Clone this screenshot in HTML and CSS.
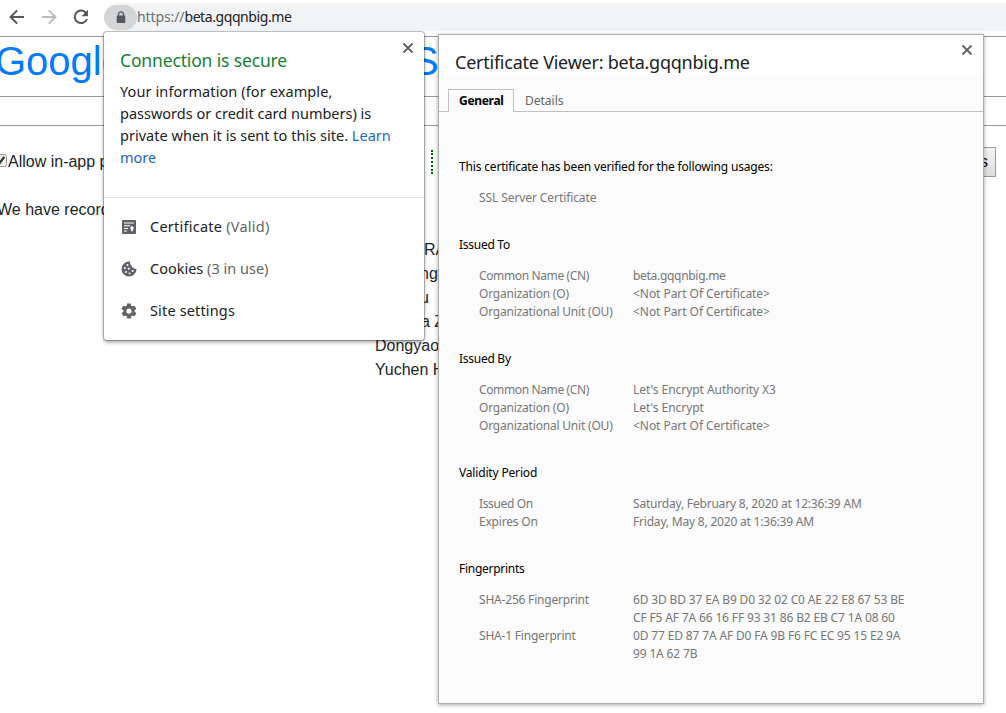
FILE: index.html
```html
<!DOCTYPE html>
<html lang="en">
<head>
<meta charset="utf-8">
<title>Certificate Viewer</title>
<link rel="stylesheet" href="styles.css">
</head>
<body>
<header class="toolbar">
  <nav class="nav">
    <svg width="18" height="18" viewBox="0 0 18 18" fill="none" stroke="#54575b" stroke-width="2"><path d="M16 9H3M9.2 2.4 2.6 9l6.6 6.6"/></svg>
    <svg width="18" height="18" viewBox="0 0 18 18" fill="none" stroke="#b9bbbd" stroke-width="2"><path d="M2 9h13M8.8 2.4 15.4 9l-6.6 6.6"/></svg>
    <svg width="18" height="18" viewBox="0 0 18 18"><path d="M14.3 5.2A6.3 6.3 0 1 0 15 11" fill="none" stroke="#54575b" stroke-width="2"/><path d="M16 1.8v6.4H9.6z" fill="#54575b"/></svg>
  </nav>
  <div class="omnibox">
    <span class="lock"><svg width="10" height="13" viewBox="0 0 10 13"><path d="M2.5 5V3.3a2.5 2.5 0 0 1 5 0V5" fill="none" stroke="#54575b" stroke-width="1.3"/><rect x=".7" y="4.6" width="8.6" height="7.4" rx="1" fill="#54575b"/></svg></span>
    <span class="url"><span class="scheme">https://</span>beta.gqqnbig.me</span>
  </div>
</header>

<main class="page">
  <h1 class="title"><span class="title-start">Google</span><span>S</span></h1>
  <div class="band"></div>
  <div class="options">
    <span class="check"><svg width="13" height="13" viewBox="0 0 13 13"><rect x=".5" y=".5" width="12" height="12" rx="2" fill="#eee" stroke="#999"/><path d="M3 6.6 5.3 9.5 10.3 2.8" fill="none" stroke="#333" stroke-width="2.2"/></svg></span>
    <span class="allow">Allow in-app p</span>
    <span class="dots"></span>
    <button class="submit">s</button>
  </div>
  <p class="records">We have record</p>
  <ul class="names">
    <li class="n1">RA</li>
    <li class="n2">ng</li>
    <li class="n3">u</li>
    <li class="n4">a Z</li>
    <li>Dongyao</li>
    <li>Yuchen H</li>
  </ul>
</main>

<section class="bubble">
  <svg class="close" width="12" height="12" viewBox="0 0 12 12"><path d="m1.5 1.5 9 9m0-9-9 9" stroke="#5f6368" stroke-width="1.9"/></svg>
  <div class="bubble-top">
    <h2 class="secure">Connection is secure</h2>
    <p class="info"><span class="i1">Your information (for example,</span><br>passwords or credit card numbers) is<br><span class="i3">private when it is sent to this site. <a>Learn</a></span><br><a>more</a></p>
  </div>
  <div class="menu">
    <div class="item"><svg width="16" height="16" viewBox="0 0 16 16"><rect x="1" y="1" width="14" height="14" rx="1" fill="#5f6368"/><path d="M3 4h10M3 6.7h6M3 9.4h4M3 12h3" stroke="#fff" stroke-width="1"/><circle cx="11" cy="9" r="1.7" fill="#fff"/><path d="M10.200 9.500h1.600V12.600l-.8-.6-.8.6z" fill="#fff"/></svg><span class="m1">Certificate <em>(Valid)</em></span></div>
    <div class="item"><svg width="16" height="16" viewBox="0 0 16 16"><path d="M8 .5A7.5 7.5 0 1 0 15.5 8c-1.2.4-2.3-.2-2.5-1.3-1.5.2-2.6-.9-2.3-2.3C9.300 4 8.500 2.500 9.300.6Q8.700.500 8 .5z" fill="#5f6368"/><g fill="#fff"><circle cx="6.500" cy="4" r="1"/><circle cx="3.800" cy="7" r="1"/><circle cx="7.700" cy="7.700" r="1"/><circle cx="5" cy="11" r="1"/><circle cx="8.500" cy="12.400" r=".9"/><circle cx="11.600" cy="10" r="1"/></g></svg><span class="m2">Cookies <em>(3 in use)</em></span></div>
    <div class="item"><svg width="18" height="18" viewBox="0 0 24 24"><path fill="#5f6368" d="M19.400 13c0-.3.100-.6.100-1s0-.700-.1-1l2.100-1.600c.2-.2.300-.4.100-.7l-2-3.400c-.1-.2-.4-.3-.6-.2l-2.500 1a7.300 7.300 0 0 0-1.700-1l-.4-2.600c0-.3-.2-.5-.5-.5h-4c-.2 0-.5.2-.5.400l-.4 2.700c-.6.200-1.100.6-1.700 1l-2.500-1c-.2-.1-.5 0-.6.200l-2 3.400c-.1.300-.1.500.1.700L4.500 11a8 8 0 0 0 0 2l-2.100 1.600c-.2.200-.2.400-.1.700l2 3.400c.1.200.4.300.6.200l2.500-1c.5.400 1.100.7 1.700 1l.4 2.600c0 .3.300.5.500.5h4c.3 0 .5-.2.500-.5l.4-2.600c.6-.3 1.200-.6 1.700-1l2.500 1c.2.100.5 0 .6-.2l2-3.400c.1-.3.1-.5-.1-.7zM12 15.500a3.500 3.500 0 1 1 0-7 3.500 3.500 0 0 1 0 7z"/></svg><span class="m3">Site settings</span></div>
  </div>
</section>

<section class="viewer">
  <svg class="close" width="12" height="12" viewBox="0 0 12 12"><path d="m1.500 1.500 9 9m0-9-9 9" stroke="#5f6368" stroke-width="1.900"/></svg>
  <h2 class="viewer-title">Certificate Viewer: beta.gqqnbig.me</h2>
  <div class="tabs"><span class="tab active">General</span><span class="tab">Details</span></div>
  <div class="details">
    <section class="group"><h3>This certificate has been verified for the following usages:</h3>
      <dl><dt class="ssl">SSL Server Certificate</dt><dd></dd></dl></section>
    <section class="group"><h3 class="tight">Issued To</h3>
      <dl><dt class="cn">Common Name (CN)</dt><dd class="host">beta.gqqnbig.me</dd><dt>Organization (O)</dt><dd>&lt;Not Part Of Certificate&gt;</dd><dt>Organizational Unit (OU)</dt><dd>&lt;Not Part Of Certificate&gt;</dd></dl></section>
    <section class="group"><h3 class="tight">Issued By</h3>
      <dl><dt class="cn">Common Name (CN)</dt><dd>Let's Encrypt Authority X3</dd><dt>Organization (O)</dt><dd>Let's Encrypt</dd><dt>Organizational Unit (OU)</dt><dd>&lt;Not Part Of Certificate&gt;</dd></dl></section>
    <section class="group"><h3>Validity Period</h3>
      <dl><dt class="on">Issued On</dt><dd class="date">Saturday, February 8, 2020 at 12:36:39 AM</dd><dt>Expires On</dt><dd class="date">Friday, May 8, 2020 at 1:36:39 AM</dd></dl></section>
    <section class="group"><h3 class="tight">Fingerprints</h3>
      <dl><dt>SHA-256 Fingerprint</dt><dd class="hex">6D 3D BD 37 EA B9 D0 32 02 C0 AE 22 E8 67 53 BE<br>CF F5 AF 7A 66 16 FF 93 31 86 B2 EB C7 1A 08 60</dd><dt>SHA-1 Fingerprint</dt><dd class="hex">0D 77 ED 87 7A AF D0 FA 9B F6 FC EC 95 15 E2 9A<br>99 1A 62 7B</dd></dl></section>
  </div>
</section>
</body>
</html>
```
FILE: styles.css
```css
* { box-sizing: border-box; }
body { margin: 0; width: 1006px; height: 713px; overflow: hidden; position: relative; background: #fff; color: #212529; font: 16px/24px "Liberation Sans", Arial, sans-serif; }
h1, h2, h3, p, ul, dl, dd { margin: 0; padding: 0; font-weight: normal; }
svg { display: block; flex: none; }
.toolbar, .bubble, .viewer { font-family: "Noto Sans", sans-serif; white-space: nowrap; }

.toolbar { height: 37px; padding-top: 3px; display: flex; border-bottom: 1px solid #999; }
.nav { width: 104px; height: 28px; padding-left: 8px; display: flex; align-items: center; gap: 14px; flex: none; }
.omnibox { flex: 1; height: 28px; display: flex; align-items: center; background: #f1f3f4; border-radius: 14px 0 0 14px; }
.lock { width: 33px; height: 25px; border-radius: 13px; background: #d3d5d7; display: flex; align-items: center; justify-content: center; }
.url { font-size: 14px; line-height: 20px; color: #202124; letter-spacing: -.42px; }
.scheme { color: #6b6f73; letter-spacing: -.1px; }

.title { height: 60px; display: flex; font-size: 40px; line-height: 48px; color: #007bff; border-bottom: 1px solid #999; margin-left: -5px; }
.title-start { width: 417px; }
.band { height: 29px; border-bottom: 1px solid #999; }
.options { height: 30px; margin-top: 21px; display: flex; align-items: center; }
.check { width: 13px; margin: -3px 0 0 -6px; }
.allow { width: 424px; padding-left: 1px; }
.dots { width: 3px; height: 24px; border-left: 2px dotted #006400; }
.submit { width: 46px; height: 30px; margin-left: 516px; padding: 0 7px; text-align: right; font: 16px "Liberation Sans", sans-serif; color: #000; border: 1px solid #999; border-radius: 0; background: linear-gradient(#f4f4f4, #ddd); }
.records { margin: 21px 0 0 -3px; }
.names { list-style: none; padding-left: 375px; margin-top: 16px; }
.n1 { padding-left: 49px; }
.n2 { padding-left: 45px; }
.n3 { padding-left: 45px; }
.n4 { padding-left: 46px; }

.bubble { position: absolute; left: 104px; top: 32px; width: 320px; height: 308px; background: #fff; border-radius: 3px; box-shadow: 0 0 0 1px rgba(0,0,0,.22), 0 2px 4px rgba(0,0,0,.4); }
.close { position: absolute; right: 10px; top: 10px; }
.viewer .close { top: 9px; }
.bubble-top { height: 166px; padding: 16px 16px 0; border-bottom: 1px solid #e4e5e6; }
.secure { font-size: 17.500px; line-height: 24px; color: #188038; letter-spacing: -.15px; }
.info { margin-top: 8px; font-size: 14.500px; line-height: 22px; color: #202124; }
.i1 { letter-spacing: .1px; }
.i3 { letter-spacing: .02px; }
.info a { color: #1967d2; }
.menu { padding: 7px 16px; }
.item { height: 42px; display: grid; grid-template-columns: 30px 1fr; align-items: center; font-size: 14.500px; color: #202124; }
.item svg { justify-self: start; margin: 2px 0 0 1px; }
.item:last-child svg { margin-left: 0; }
.item em { font-style: normal; color: #5f6368; }
.m1 { letter-spacing: .24px; }
.m3 { letter-spacing: .15px; }

.viewer { position: absolute; left: 438px; top: 34px; width: 546px; height: 670px; background: #fbfbfb; border: 1px solid #adadad; box-shadow: 0 1px 4px rgba(0,0,0,.35); }
.viewer-title { height: 40px; padding: 15px 16px 0; background: #fff; font-size: 18px; line-height: 25px; color: #202124; letter-spacing: -.24px; }
.tabs { height: 37px; padding: 14px 9px 0; display: flex; border-bottom: 1px solid #c0c0c0; font-size: 12px; line-height: 22px; }
.tab { height: 23px; padding: 1px 11px 0; color: #666; }
.tab.active { width: 66px; padding: 0 10px; border: 1px solid #c0c0c0; border-bottom: 0; background: #fbfbfb; color: #000; font-weight: bold; letter-spacing: -.3px; }
.details { padding: 46px 20px 0; display: flex; flex-direction: column; gap: 29px; font-size: 12px; line-height: 18px; }
.group h3 { font-size: 12px; color: #000; letter-spacing: -.17px; }
.group h3.tight { letter-spacing: -.27px; }
.group dl { margin: 13px 0 0 20px; display: grid; grid-template-columns: 154px 1fr; color: #777; }
.group dt { letter-spacing: -.2px; }
.group dd { letter-spacing: -.05px; }
.group .ssl { letter-spacing: -.09px; }
.group .on { letter-spacing: -.35px; }
.group .cn { letter-spacing: -.37px; }
.group .host { letter-spacing: -.3px; }
.group .date { letter-spacing: -.2px; }
.group .hex { letter-spacing: -.15px; }
```
